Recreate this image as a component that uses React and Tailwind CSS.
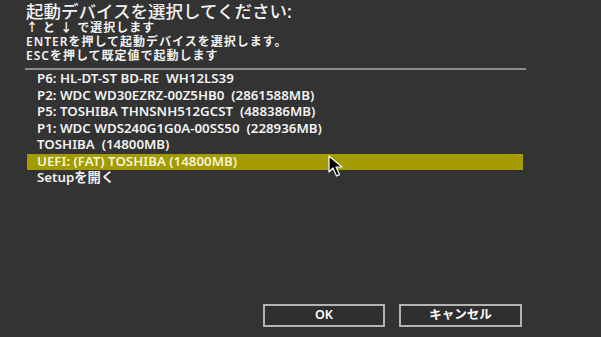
const devices = [
  'P6: HL-DT-ST BD-RE  WH12LS39',
  'P2: WDC WD30EZRZ-00Z5HB0  (2861588MB)',
  'P5: TOSHIBA THNSNH512GCST  (488386MB)',
  'P1: WDC WDS240G1G0A-00SS50  (228936MB)',
  'TOSHIBA  (14800MB)',
  'UEFI: (FAT) TOSHIBA (14800MB)',
  'Setupを開く',
]

function Cursor() {
  return (
    <svg className="absolute left-[328px] top-[155px]" width="17" height="23" viewBox="0 0 17 23">
      <path
        d="M1 1 L1 17 L5 13 L8.5 21 L11.5 19.6 L8 12 L14 12 Z"
        fill="#000"
        stroke="#fff"
        strokeWidth="1.2"
        strokeLinejoin="round"
      />
    </svg>
  )
}

export default function App() {
  const selected = 5

  return (
    <div
      className="relative flex h-[337px] w-[601px] flex-col overflow-hidden bg-[#333333] text-[#f2f2f2]"
      style={{ fontFamily: '"Noto Sans", "Noto Sans CJK JP", sans-serif' }}
    >
      <header className="pl-[26px] pt-[2px]">
        <h1 className="text-[17.5px] leading-[19px] font-medium">起動デバイスを選択してください:</h1>
        <div className="text-[12px] leading-[14px] tracking-[1px] font-semibold">
          <p>↑ と ↓ で選択します</p>
          <p>ENTERを押して起動デバイスを選択します。</p>
          <p>ESCを押して既定値で起動します</p>
        </div>
      </header>

      <div className="ml-[25px] mt-[5px] h-[2px] w-[501px] bg-[#8c8c8c]" />

      <ul className="ml-[27px] mt-[1px] w-[496px] text-[13.3px] font-semibold">
        {devices.map((name, i) => (
          <li
            key={name}
            className={
              i === selected
                ? 'flex h-[16.5px] items-center whitespace-pre bg-[#a39b00] pl-[10px] text-[#f4f4dc]'
                : 'flex h-[16.5px] items-center whitespace-pre pl-[10px]'
            }
          >
            {name}
          </li>
        ))}
      </ul>

      <div className="mt-auto mb-[10px] flex justify-end gap-[14px] pr-[79px]">
        <button className="h-[23px] w-[122px] border-2 border-[#b4b4b4] bg-[#2f2f2f] text-[12.5px] font-semibold text-white">
          OK
        </button>
        <button className="h-[23px] w-[123px] border-2 border-[#b4b4b4] bg-[#2f2f2f] text-[12.5px] font-semibold text-white">
          キャンセル
        </button>
      </div>

      <Cursor />
    </div>
  )
}
